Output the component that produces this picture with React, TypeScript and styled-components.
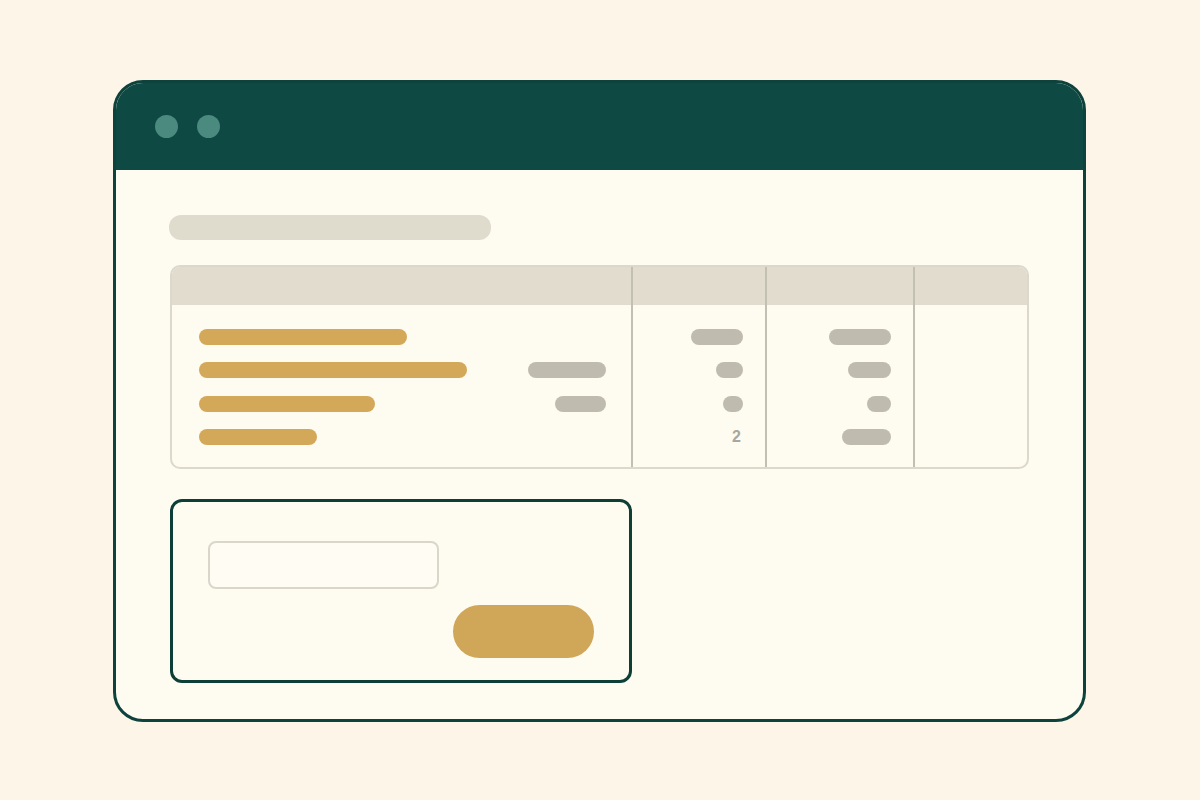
import React from "react";
import styled, { createGlobalStyle } from "styled-components";

const Global = createGlobalStyle`
  html, body { margin: 0; padding: 0; background: #fdf5e8; }
  body { font-family: "Liberation Sans", Arial, sans-serif; }
`;

const Page = styled.div`
  width: 1200px;
  height: 800px;
  display: flex;
  align-items: flex-start;
  justify-content: flex-start;
  padding: 80px 0 0 113px;
  box-sizing: border-box;
`;

const Window = styled.div`
  width: 973px;
  height: 642px;
  box-sizing: border-box;
  border: 3px solid #0d433c;
  border-radius: 30px;
  background: #fefbf0;
  overflow: hidden;
  display: flex;
  flex-direction: column;
`;

const TitleBar = styled.div`
  height: 87px;
  background: #0e4943;
  display: flex;
  align-items: center;
  gap: 19px;
  padding-left: 39px;
  flex-shrink: 0;
`;

const Dot = styled.span`
  width: 23px;
  height: 23px;
  border-radius: 50%;
  background: #4b8a7f;
`;

const Content = styled.div`
  padding: 45px 54px 0 54px;
  display: flex;
  flex-direction: column;
  align-items: flex-start;
`;

const TitlePlaceholder = styled.div`
  width: 322px;
  height: 25px;
  border-radius: 12px;
  background: #e0dccd;
  margin-left: -1px;
`;

const Table = styled.div`
  margin-top: 25px;
  width: 859px;
  height: 204px;
  box-sizing: border-box;
  border: 2.5px solid #dcd8cb;
  border-radius: 10px;
  overflow: hidden;
  display: grid;
  grid-template-columns: 459px 134px 148px 1fr;
`;

const Column = styled.div<{ $divider?: boolean }>`
  display: flex;
  flex-direction: column;
  border-left: ${(p) => (p.$divider ? "2px solid #c2bfb3" : "none")};
`;

const HeaderCell = styled.div`
  height: 38px;
  background: #e1dccd;
  flex-shrink: 0;
`;

const Body = styled.div<{ $padLeft: number; $padRight: number }>`
  padding: 15px ${(p) => p.$padRight}px 0 ${(p) => p.$padLeft}px;
  display: flex;
  flex-direction: column;
`;

const Cell = styled.div`
  height: 33.5px;
  display: flex;
  align-items: center;
  justify-content: space-between;
`;

const RightCell = styled(Cell)`
  justify-content: flex-end;
`;

const Bar = styled.div<{ $w: number; $tone: "gold" | "gray" }>`
  width: ${(p) => p.$w}px;
  height: 16px;
  border-radius: 8px;
  background: ${(p) => (p.$tone === "gold" ? "#d4a859" : "#bfbcaf")};
`;

const Num = styled.span`
  font-family: "Liberation Sans", Arial, sans-serif;
  font-weight: 700;
  font-size: 16px;
  color: #aaa79b;
  margin-right: 2px;
`;

const FormBox = styled.div`
  margin-top: 30px;
  width: 462px;
  height: 184px;
  box-sizing: border-box;
  border: 3px solid #0d3f37;
  border-radius: 12px;
  padding: 39px 35px 0 35px;
  display: flex;
  flex-direction: column;
`;

const Input = styled.div`
  width: 231px;
  height: 48px;
  box-sizing: border-box;
  border: 2.5px solid #dad6ca;
  border-radius: 8px;
  background: #fefcf3;
`;

const Button = styled.div`
  align-self: flex-end;
  margin-top: 16px;
  width: 141px;
  height: 53px;
  border-radius: 27px;
  background: #d0a658;
`;

const col1 = [
  { gold: 208, gray: 0 },
  { gold: 268, gray: 78 },
  { gold: 176, gray: 51 },
  { gold: 118, gray: 0 },
];
const col2 = [52, 27, 20, -1];
const col3 = [62, 43, 24, 49];

export default function App() {
  return (
    <>
      <Global />
      <Page>
        <Window>
          <TitleBar>
            <Dot />
            <Dot />
          </TitleBar>
          <Content>
            <TitlePlaceholder />
            <Table>
              <Column>
                <HeaderCell />
                <Body $padLeft={27} $padRight={25}>
                  {col1.map((r, i) => (
                    <Cell key={i}>
                      <Bar $w={r.gold} $tone="gold" />
                      {r.gray > 0 && <Bar $w={r.gray} $tone="gray" />}
                    </Cell>
                  ))}
                </Body>
              </Column>
              <Column $divider>
                <HeaderCell />
                <Body $padLeft={0} $padRight={22}>
                  {col2.map((w, i) => (
                    <RightCell key={i}>
                      {w > 0 ? <Bar $w={w} $tone="gray" /> : <Num>2</Num>}
                    </RightCell>
                  ))}
                </Body>
              </Column>
              <Column $divider>
                <HeaderCell />
                <Body $padLeft={0} $padRight={22}>
                  {col3.map((w, i) => (
                    <RightCell key={i}>
                      <Bar $w={w} $tone="gray" />
                    </RightCell>
                  ))}
                </Body>
              </Column>
              <Column $divider>
                <HeaderCell />
              </Column>
            </Table>
            <FormBox>
              <Input />
              <Button />
            </FormBox>
          </Content>
        </Window>
      </Page>
    </>
  );
}
